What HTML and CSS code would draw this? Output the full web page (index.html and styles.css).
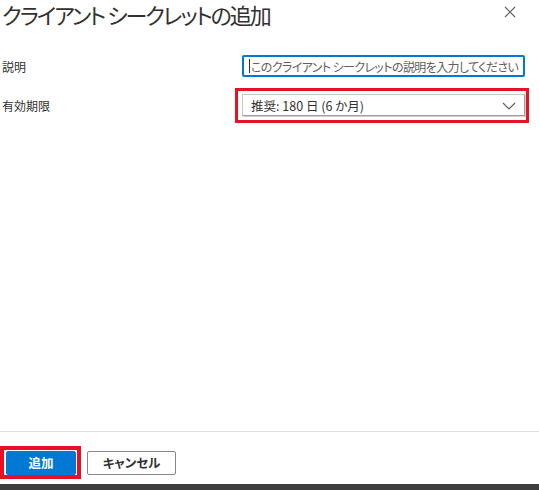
FILE: index.html
```html
<!DOCTYPE html>
<html lang="ja">
<head>
<meta charset="utf-8">
<link rel="stylesheet" href="styles.css">
</head>
<body>
<div class="panel">
  <header class="head">
    <h1 class="title">クライアント シークレットの追加</h1>
    <button class="close" aria-label="閉じる">
      <svg width="12" height="12" viewBox="0 0 12 12"><path d="M1 1L11 11M11 1L1 11" stroke="#605e5c" stroke-width="1.1" fill="none"/></svg>
    </button>
  </header>
  <div class="form">
    <label class="lbl">説明</label>
    <div class="ctl">
      <div class="input"><span class="caret"></span><span class="ph">このクライアント シークレットの説明を入力してください</span></div>
    </div>
    <label class="lbl">有効期限</label>
    <div class="ctl">
      <div class="select"><span>推奨: 180 日 (6 か月)</span>
        <svg class="chev" width="14" height="8" viewBox="0 0 14 8"><path d="M1 1L7 7L13 1" stroke="#605e5c" stroke-width="1.1" fill="none"/></svg>
        <span class="mark mark-sel"></span>
      </div>
    </div>
  </div>
  <div class="spacer"></div>
  <footer class="foot">
    <button class="btn primary">追加<span class="mark mark-btn"></span></button>
    <button class="btn secondary">キャンセル</button>
  </footer>
  <div class="bar"></div>
</div>
</body>
</html>
```
FILE: styles.css
```css
* { box-sizing: border-box; }
html, body { margin: 0; padding: 0; background: #fff; }
body {
  font-family: "Noto Sans CJK JP", "Noto Sans", sans-serif;
  color: #323130;
  font-feature-settings: "palt";
}
.panel {
  width: 539px;
  height: 490px;
  display: flex;
  flex-direction: column;
  overflow: hidden;
}
.head {
  height: 44px;
  display: flex;
  align-items: flex-start;
  justify-content: space-between;
  padding: 0 0 0 2px;
}
.title {
  margin: 0;
  padding-right: 4px;
  font-size: 22px;
  font-weight: 400;
  line-height: 28px;
  color: #323130;
  letter-spacing: -2px;
  white-space: nowrap;
}
.close {
  border: 0;
  background: none;
  padding: 0;
  margin: 6px 23px 0 0;
  width: 12px;
  height: 12px;
  display: flex;
}
.form {
  display: grid;
  grid-template-columns: 242px 283px;
  row-gap: 17px;
  align-items: center;
  padding-top: 11px;
}
.lbl {
  font-size: 12px;
  padding-left: 2px;
  color: #323130;
}
.ctl { height: 22px; }
.input {
  height: 22px;
  border: 2px solid #0078d4;
  border-radius: 2px;
  display: flex;
  align-items: center;
  padding-left: 5px;
  font-size: 12px;
}
.caret {
  width: 1px;
  height: 14px;
  background: #323130;
  margin-right: 1px;
}
.ph { color: #605e5c; white-space: nowrap; letter-spacing: -0.6px; }
.select {
  position: relative;
  height: 22px;
  border: 1px solid #c8c6c4;
  border-right-color: #a19f9d;
  border-bottom-color: #a19f9d;
  box-shadow: 1px 1px 0 #d2d0ce;
  display: flex;
  align-items: center;
  justify-content: space-between;
  padding: 0 8px 0 8px;
  font-size: 12.5px;
  color: #323130;
}
.chev { margin-top: 1px; }
.mark {
  position: absolute;
  border: 3px solid #e81123;
  pointer-events: none;
}
.mark-sel { top: -7px; left: -8px; right: -5px; bottom: -8px; }
.spacer { flex: 1; }
.foot {
  height: 53px;
  border-top: 1px solid #e1dfdd;
  display: flex;
  align-items: flex-start;
  gap: 11px;
  padding: 19px 0 0 6px;
}
.btn {
  height: 24px;
  font-family: inherit;
  font-feature-settings: "palt";
  font-size: 12.5px;
  font-weight: 700;
  border-radius: 2px;
  padding: 0;
  line-height: 20px;
}
.primary {
  position: relative;
  width: 70px;
  background: #0078d4;
  color: #fff;
  border: 1px solid #0078d4;
}
.secondary {
  width: 89px;
  background: #fff;
  color: #323130;
  border: 1px solid #8a8886;
}
.mark-btn { top: -6px; left: -7px; right: -6px; bottom: -5px; border-width: 4px; }
.bar { height: 6px; background: #3e3e3e; }
```
